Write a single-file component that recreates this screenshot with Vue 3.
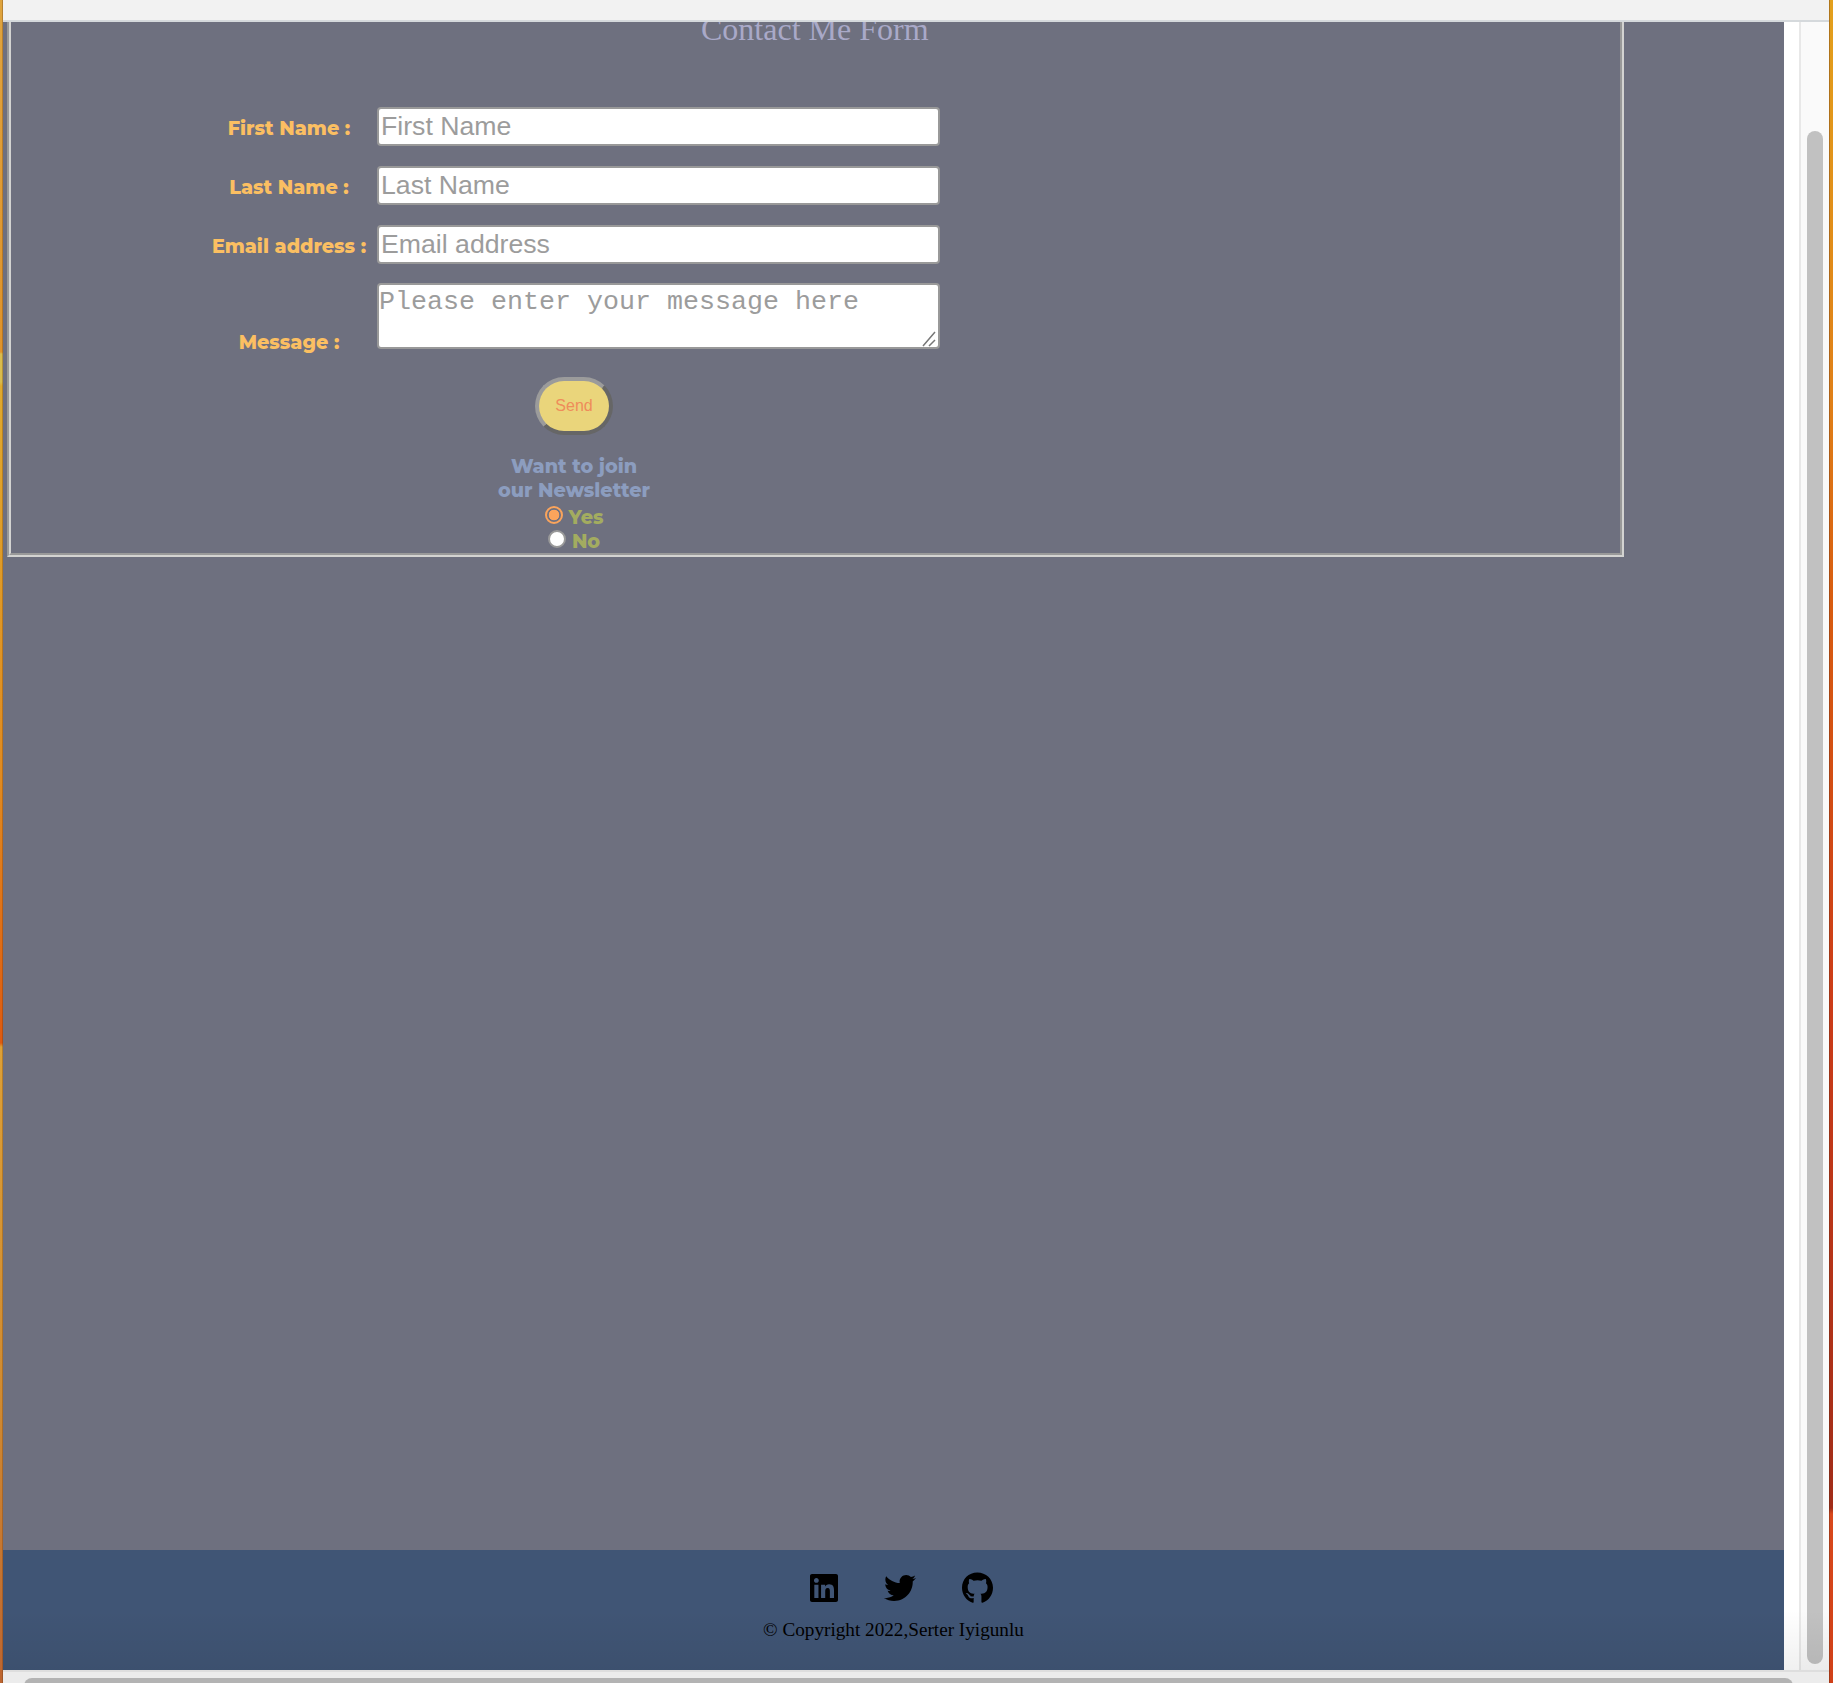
<script setup>
const fields = [
  { id: 'first', label: 'First Name :', hint: 'First Name' },
  { id: 'last', label: 'Last Name :', hint: 'Last Name' },
  { id: 'email', label: 'Email address :', hint: 'Email address' },
]
const socials = [
  { name: 'linkedin', w: 448, d: 'M416 32H31.9C14.3 32 0 46.5 0 64.3v383.4C0 465.5 14.3 480 31.9 480H416c17.6 0 32-14.5 32-32.3V64.3c0-17.8-14.4-32.3-32-32.3zM135.4 416H69V202.2h66.5V416zm-33.2-243c-21.3 0-38.5-17.3-38.5-38.5S80.9 96 102.2 96c21.2 0 38.5 17.3 38.5 38.5 0 21.3-17.2 38.5-38.5 38.5zm282.1 243h-66.4V312c0-24.8-.5-56.7-34.5-56.7-34.6 0-39.9 27-39.9 54.9V416h-66.4V202.2h63.7v29.2h.9c8.9-16.8 30.6-34.5 62.9-34.5 67.2 0 79.7 44.3 79.7 101.9V416z' },
  { name: 'twitter', w: 512, d: 'M459.37 151.716c.325 4.548.325 9.097.325 13.645 0 138.72-105.583 298.558-298.558 298.558-59.452 0-114.68-17.219-161.137-47.106 8.447.974 16.568 1.299 25.34 1.299 49.055 0 94.213-16.568 130.274-44.832-46.132-.975-84.792-31.188-98.112-72.772 6.498.974 12.995 1.624 19.818 1.624 9.421 0 18.843-1.3 27.614-3.573-48.081-9.747-84.143-51.98-84.143-102.985v-1.299c13.969 7.797 30.214 12.67 47.431 13.319-28.264-18.843-46.781-51.005-46.781-87.391 0-19.492 5.197-37.36 14.294-52.954 51.655 63.675 129.3 105.258 216.365 109.807-1.624-7.797-2.599-15.918-2.599-24.04 0-57.828 46.782-104.934 104.934-104.934 30.213 0 57.502 12.67 76.67 33.137 23.715-4.548 46.456-13.32 66.599-25.34-7.798 24.366-24.366 44.833-46.132 57.827 21.117-2.273 41.584-8.122 60.426-16.243-14.292 20.791-32.161 39.308-52.628 54.253z' },
  { name: 'github', w: 496, d: 'M165.9 397.4c0 2-2.3 3.6-5.2 3.6-3.3.3-5.6-1.3-5.6-3.6 0-2 2.3-3.6 5.2-3.6 3-.3 5.6 1.3 5.6 3.6zm-31.1-4.5c-.7 2 1.3 4.3 4.3 4.9 2.6 1 5.6 0 6.2-2s-1.3-4.3-4.3-5.2c-2.6-.7-5.5.3-6.2 2.3zm44.2-1.7c-2.9.7-4.9 2.6-4.6 4.9.3 2 2.9 3.3 5.9 2.6 2.9-.7 4.9-2.6 4.6-4.6-.3-1.9-3-3.2-5.9-2.9zM244.8 8C106.1 8 0 113.3 0 252c0 110.9 69.8 205.8 169.5 239.2 12.8 2.3 17.3-5.6 17.3-12.1 0-6.2-.3-40.4-.3-61.4 0 0-70 15-84.7-29.8 0 0-11.4-29.1-27.8-36.6 0 0-22.9-15.7 1.6-15.4 0 0 24.9 2 38.6 25.8 21.9 38.6 58.6 27.5 72.9 20.9 2.3-16 8.8-27.1 16-33.7-55.9-6.2-112.3-14.3-112.3-110.5 0-27.5 7.6-41.3 23.6-58.9-2.6-6.5-11.1-33.3 2.6-67.9 20.9-6.5 69 27 69 27 20-5.6 41.5-8.5 62.8-8.5s42.8 2.9 62.8 8.5c0 0 48.1-33.6 69-27 13.7 34.7 5.2 61.4 2.6 67.9 16 17.7 25.8 31.5 25.8 58.9 0 96.5-58.9 104.2-114.8 110.5 9.2 7.9 17 22.9 17 46.4 0 33.7-.3 75.4-.3 83.6 0 6.5 4.6 14.4 17.3 12.1C428.2 457.8 496 362.9 496 252 496 113.3 383.5 8 244.8 8z' },
]
</script>

<template>
  <div class="desktop">
    <div class="edge left"></div>
    <div class="window">
      <header class="toolbar"></header>
      <div class="viewport">
        <main class="page">
          <section class="content">
            <div class="frame">
              <div class="frame-inner">
                <h1><span>Contact Me Form</span></h1>
                <form @submit.prevent>
                  <div v-for="f in fields" :key="f.id" class="row">
                    <label :for="f.id">{{ f.label }}</label>
                    <input :id="f.id" class="field" type="text" :placeholder="f.hint" />
                  </div>
                  <div class="row message">
                    <label for="message">Message :</label>
                    <div class="area-wrap">
                      <textarea id="message" class="field" placeholder="Please enter your message here"></textarea>
                      <svg class="grip" width="16" height="16" viewBox="0 0 16 16"><path d="M2 15 14 1M8 15l6-6" /></svg>
                    </div>
                  </div>
                  <button type="submit">Send</button>
                  <div class="news">Want to join<br />our Newsletter</div>
                  <div class="choice"><i class="radio on"></i><span>Yes</span></div>
                  <div class="choice"><i class="radio"></i><span>No</span></div>
                </form>
              </div>
            </div>
          </section>
          <footer>
            <div class="socials">
              <svg v-for="s in socials" :key="s.name" :width="s.w / 16" height="32" :viewBox="`0 0 ${s.w} 512`"><path :d="s.d" /></svg>
            </div>
            <p>© Copyright 2022,Serter Iyigunlu</p>
          </footer>
        </main>
        <div class="margin"></div>
        <div class="track"><div class="thumb"></div></div>
      </div>
      <div class="htrack"><div class="hthumb"></div></div>
      <div class="shade"></div>
    </div>
    <div class="edge right"></div>
  </div>
</template>

<style>
body { margin: 0; overflow: hidden; }
</style>

<style scoped>
* { box-sizing: border-box; }
.desktop { display: flex; width: 1833px; height: 1683px; overflow: hidden; }
.edge.left { width: 3px; background: linear-gradient(90deg, transparent 66%, rgba(90, 50, 20, .3) 66%), linear-gradient(#dfa43e 0, #e0932a 352px, #d9bb4c 354px, #d9bb4c 382px, #dfa92d 386px, #e08a20 780px, #de5a10 1043px, #dda036 1047px, #d08a30 1400px, #bd6530 1683px); }
.edge.right { width: 4px; background: linear-gradient(90deg, rgba(80, 40, 20, .35) 1px, transparent 1px), linear-gradient(#e3a01c 0, #e08018 400px, #d85c10 600px, #cc3c18 1000px, #a02c18 1508px, #d8481c 1514px, #d04018 1683px); }
.window { position: relative; display: flex; flex-direction: column; width: 1826px; background: #fff; }
.toolbar { height: 22px; background: #f2f2f2; border-bottom: 2px solid #d5d9dc; }
.viewport { display: flex; height: 1648px; overflow: hidden; }
.page { width: 1781px; }
.content { height: 1528px; padding-left: 4px; background: #6e707f; overflow: hidden; }
.frame { width: 1617px; height: 535px; border: 2px solid #d3d3d1; border-top: 0; border-left-color: #999; }
.frame-inner { height: 533px; border: 2px solid #999; border-top: 0; border-left-color: #d3d3d1; }
h1 { display: flow-root; height: 85px; margin: 0; padding-left: 690px; font: 400 32px/37px "Liberation Serif", serif; color: #a9a9c8; }
h1 span { display: block; margin-top: -11px; }
form { width: 734px; margin-left: 196px; }
.row { display: flex; height: 39px; margin-bottom: 20px; }
.row label { width: 164px; padding-top: 9px; text-align: center; color: #fbbf62; }
.row label, .news, .choice { font: 800 19.2px/24px Montserrat, Inter, sans-serif; white-space: nowrap; }
.field { display: block; width: 563px; height: 39px; margin: 0 0 0 6px; padding: 0 2px; border: 2px solid #999; border-radius: 4px; background: #fff; outline: 0; font: 26.66px/30px "Liberation Sans", Arial, sans-serif; }
.field::placeholder { color: #9c9c9c; opacity: 1; }
.row.message { height: 66px; margin: -1px 0 28px; }
.row.message label { padding-top: 47px; }
.area-wrap { position: relative; }
textarea.field { height: 66px; padding: 1px 0; resize: none; overflow: hidden; font: 26.66px/32px "Liberation Mono", "Courier New", monospace; }
.grip { position: absolute; right: 3px; bottom: 2px; fill: none; stroke: #777; stroke-width: 1.5; }
button { display: block; width: 78px; height: 58px; margin: 0 auto 19px; padding: 0; border: 4px solid; border-color: #9b9b9b #666 #666 #9b9b9b; border-radius: 30px; background: #ead57b; color: #ef8c5a; font: 16px/50px "Liberation Sans", Arial, sans-serif; }
.news { margin-bottom: 2px; text-align: center; color: #8c9dbf; }
.choice { display: flex; justify-content: center; height: 24px; gap: 6px; color: #a3ac60; }
.choice span { padding-top: 1px; }
.radio { width: 18px; height: 18px; margin-top: 2px; border: 2px solid #999; border-radius: 50%; background: #fff; }
.radio.on { border-color: #faa45c; background: radial-gradient(circle, #faa45c 5px, #6e707f 5.6px); }
footer { height: 120px; padding-top: 22px; background: #405575; }
.socials { display: flex; justify-content: center; gap: 46px; height: 32px; padding-left: 15px; }
footer p { margin: 14px 0 0; text-align: center; font: 19.2px/24px "Liberation Serif", serif; color: #000; }
.margin { width: 15px; background: #fff; }
.track { width: 30px; padding: 109px 0 0 6px; border-left: 2px solid #e8e8e8; background: #fafafa; }
.thumb { width: 16px; height: 1533px; border-radius: 8px; background: #c1c1c1; }
.htrack { flex: 1; padding: 6px 0 0 21px; border-top: 2px solid #dedede; background: #ececec; overflow: hidden; }
.hthumb { width: 1769px; height: 16px; border-radius: 8px; background: #b3b3b3; }
.shade { position: absolute; left: 0; right: 0; bottom: 13px; height: 60px; background: linear-gradient(transparent, rgba(0, 0, 0, .06)); }
</style>
